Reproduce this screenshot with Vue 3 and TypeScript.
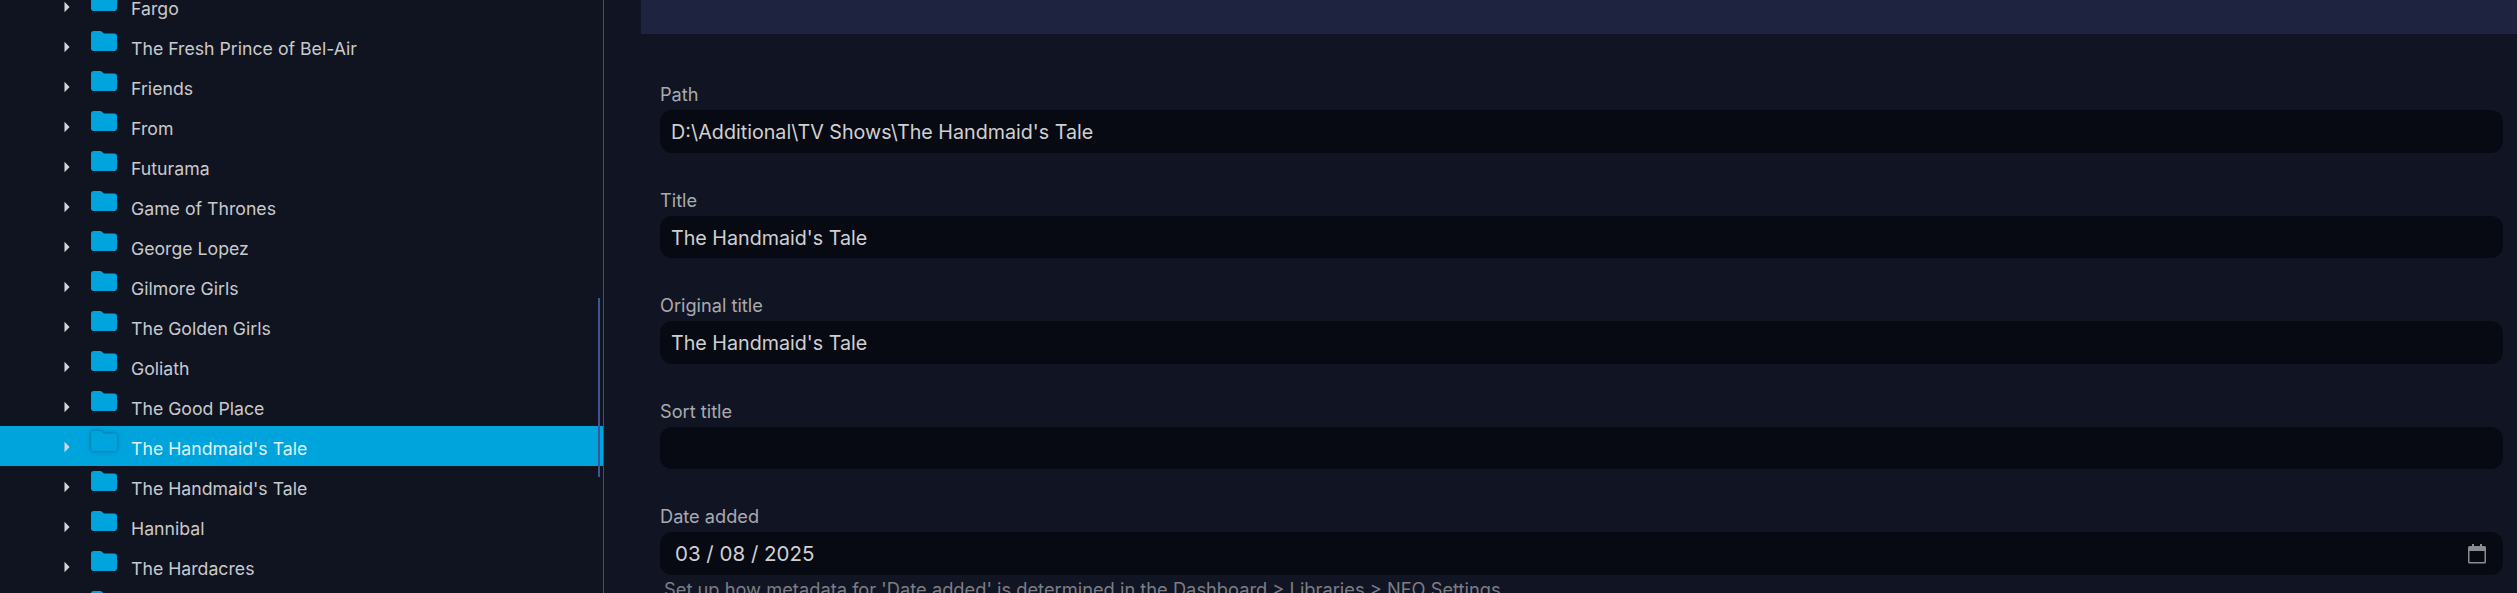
<script setup lang="ts">
interface Field {
  label: string
  value: string
}

const shows: string[] = [
  'Fargo',
  'The Fresh Prince of Bel-Air',
  'Friends',
  'From',
  'Futurama',
  'Game of Thrones',
  'George Lopez',
  'Gilmore Girls',
  'The Golden Girls',
  'Goliath',
  'The Good Place',
  "The Handmaid's Tale",
  "The Handmaid's Tale",
  'Hannibal',
  'The Hardacres',
  'The Haunting',
]
const selectedIndex = 11

const fields: Field[] = [
  { label: 'Path', value: "D:\\Additional\\TV Shows\\The Handmaid's Tale" },
  { label: 'Title', value: "The Handmaid's Tale" },
  { label: 'Original title', value: "The Handmaid's Tale" },
  { label: 'Sort title', value: '' },
]
</script>

<template>
  <div class="page">
    <!-- Library tree -->
    <aside class="sidebar">
      <ul class="tree">
        <li
          v-for="(show, index) in shows"
          :key="index"
          class="row"
          :class="{ selected: index === selectedIndex }"
        >
          <svg class="arrow" viewBox="0 0 6 12"><path d="M0.5 0.8 5.6 6 0.5 11.2Z" /></svg>
          <svg class="folder" viewBox="0 0 26 20">
            <path d="M2.5 0H9.2C10 0 10.6 .3 11.2 .9L13 2.6H23.5C24.9 2.6 26 3.7 26 5.1V17.5C26 18.9 24.9 20 23.5 20H2.5C1.1 20 0 18.9 0 17.5V2.5C0 1.1 1.1 0 2.5 0Z" />
          </svg>
          <span class="name">{{ show }}</span>
        </li>
      </ul>
      <div class="scroll-thumb"></div>
    </aside>

    <!-- Metadata form -->
    <main class="content">
      <div class="top-bar"></div>
      <form class="form">
        <div v-for="field in fields" :key="field.label" class="field">
          <label class="label">{{ field.label }}</label>
          <div class="input">{{ field.value }}</div>
        </div>
        <div class="field">
          <label class="label">Date added</label>
          <div class="input date">
            <span>03 / 08 / 2025</span>
            <svg class="calendar" viewBox="0 0 20 20">
              <path d="M5 0h2v2h6V0h2v2h2.500A1.500 1.500 0 0 1 19 3.500V18a1.500 1.500 0 0 1-1.500 1.500h-15A1.500 1.500 0 0 1 1 18V3.500A1.500 1.500 0 0 1 2.500 2H5Z M2.500 7v10.500a.5.5 0 0 0 .5.5h14a.5.5 0 0 0 .5-.5V7Z" fill-rule="evenodd" />
            </svg>
          </div>
          <p class="help">Set up how metadata for 'Date added' is determined in the Dashboard &gt; Libraries &gt; NFO Settings</p>
        </div>
      </form>
    </main>
  </div>
</template>

<style scoped>
.page {
  display: flex;
  height: 593px;
  overflow: hidden;
  font-family: Inter, "Liberation Sans", sans-serif;
  background: #111523;
}

/* Tree */
.sidebar {
  position: relative;
  flex: 0 0 604px;
  box-sizing: border-box;
  border-right: 1px solid #4a4d5c;
  background: #101320;
  overflow: hidden;
}

.tree {
  list-style: none;
  margin: -14px 0 0;
  padding: 0;
}

.row {
  display: flex;
  align-items: flex-start;
  height: 40px;
  color: #c9cacd;
  font-size: 17.7px;
}

.row.selected {
  background: #00a4dc;
  color: #dff3fb;
}

.arrow {
  width: 6px;
  height: 12px;
  margin: 15px 0 0 64px;
  fill: #d6d6d8;
  flex-shrink: 0;
}

.folder {
  width: 26px;
  height: 20px;
  margin: 5px 0 0 21px;
  fill: #00a4dc;
  flex-shrink: 0;
}

.selected .folder {
  filter: drop-shadow(0 0 2px rgba(0, 60, 100, 0.6));
}

.name {
  margin-left: 14px;
  line-height: 46px;
  white-space: nowrap;
}

.scroll-thumb {
  position: absolute;
  top: 298px;
  right: 3px;
  width: 2px;
  height: 179px;
  background: #3f5596;
}

/* Form */
.content {
  flex: 1;
  min-width: 0;
}

.top-bar {
  height: 34px;
  margin-left: 37px;
  background: #1e2340;
}

.form {
  padding: 47px 14px 0 56px;
}

.field {
  margin-bottom: 34px;
}

.label {
  display: block;
  height: 29px;
  line-height: 26px;
  font-size: 18.2px;
  color: #a9aaaf;
}

.input {
  box-sizing: border-box;
  height: 42.6px;
  padding: 0 11px;
  line-height: 44px;
  font-size: 19.7px;
  color: #cfd0d3;
  background: #070a12;
  border-radius: 12px;
}

.date {
  display: flex;
  align-items: center;
  justify-content: space-between;
  padding: 0 16px 0 15px;
  font-size: 20.5px;
}

.calendar {
  width: 20px;
  height: 20px;
  fill: #8b8c90;
}

.help {
  margin: 1px 0 0 4px;
  font-size: 18.3px;
  line-height: 26px;
  color: #7d7e84;
  white-space: nowrap;
}
</style>

<style>
html,
body {
  background: #111523;
  overflow: hidden;
}
</style>
